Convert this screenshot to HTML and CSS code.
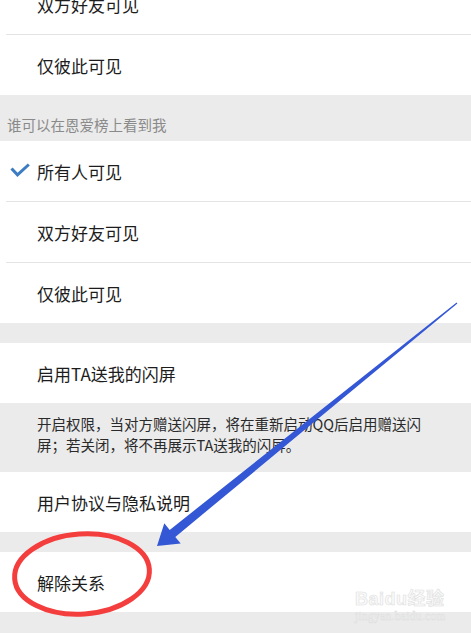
FILE: index.html
```html
<!DOCTYPE html>
<html lang="zh-CN">
<head>
  <meta charset="UTF-8" />
  <meta name="viewport" content="width=device-width, initial-scale=1.0" />
  <title>恩爱榜设置</title>
  <link rel="stylesheet" href="styles.css">
</head>
<body>

<div class="screen">
  <ul class="group group-top">
    <li class="row">双方好友可见</li>
    <li class="row">仅彼此可见</li>
  </ul>

  <div class="section-title">谁可以在恩爱榜上看到我</div>

  <ul class="group">
    <li class="row checked">
      <svg class="check" viewBox="0 0 20 14" width="20" height="14">
        <path d="M1.5 5.5 L7.5 11.8 L18.8 1.5" />
      </svg>
      所有人可见
    </li>
    <li class="row">双方好友可见</li>
    <li class="row">仅彼此可见</li>
  </ul>

  <div class="spacer"></div>

  <ul class="group">
    <li class="row">启用TA送我的闪屏</li>
  </ul>

  <p class="note">开启权限，当对方赠送闪屏，将在重新启动QQ后启用赠送闪屏；若关闭，将不再展示TA送我的闪屏。</p>

  <ul class="group">
    <li class="row">用户协议与隐私说明</li>
  </ul>

  <div class="spacer"></div>

  <ul class="group">
    <li class="row">解除关系</li>
  </ul>
</div>

<!-- 标注：箭头和圈 -->
<svg class="marks" viewBox="0 0 471 633" width="471" height="633">
  <polygon class="arrow" points="457.4,303.5 175.3,536.9 180.7,543.5 157,546 164.3,523.3 169.7,529.9 456.6,302.5" />
  <ellipse class="ring" cx="82" cy="574" rx="67.5" ry="40" transform="rotate(-4 82 574)" />
</svg>

<div class="watermark">
  <div class="wm-logo">Bai<span class="wm-du">du</span>经验</div>
  <div class="wm-url">jingyan.baidu.com</div>
</div>

</body>
</html>
```

FILE: styles.css
```css
html, body {
  margin: 0;
  padding: 0;
}

body {
  width: 471px;
  height: 633px;
  overflow: hidden;
  position: relative;
  background: #ebebeb;
  font-family: "Noto Sans CJK SC", "Noto Sans", sans-serif;
  color: #1c1c1c;
}

.group {
  list-style: none;
  margin: 0;
  padding: 0 0 0 6px;
  background: white;
}

.group-top {
  margin-top: -26px;
}

.row {
  height: 60px;
  display: flex;
  align-items: center;
  padding-left: 31px;
  font-size: 17px;
}

.row + .row {
  border-top: 1px solid #e4e4e4;
}

.checked {
  padding-left: 4px;
}

.check {
  fill: none;
  stroke: #3c7cc3;
  stroke-width: 3;
  margin-right: 7px;
  margin-top: -3px;
}

.section-title {
  padding: 22px 0 8px 7px;
  line-height: 16px;
  font-size: 14.5px;
  color: #8a8a8a;
}

.spacer {
  height: 20px;
}

.note {
  margin: 0;
  padding: 10px 40px 17px 37px;
  font-size: 14.5px;
  line-height: 21px;
  color: #2a2a2a;
}

.marks {
  position: absolute;
  top: 0;
  left: 0;
  pointer-events: none;
}

.arrow {
  fill: #3457d5;
}

.ring {
  fill: none;
  stroke: #f43d3d;
  stroke-width: 5;
}

.watermark {
  position: absolute;
  left: 355px;
  top: 588px;
  color: #fafafa;
  -webkit-text-stroke: 0.6px #e0e0e0;
  pointer-events: none;
}

.wm-logo {
  font-family: "Liberation Sans", "Noto Sans CJK SC", sans-serif;
  font-weight: bold;
  font-size: 18px;
  line-height: 22px;
  letter-spacing: 0.5px;
}

.wm-url {
  font-family: "Liberation Serif", serif;
  font-size: 11.5px;
  line-height: 12px;
  letter-spacing: 0.3px;
}
```
